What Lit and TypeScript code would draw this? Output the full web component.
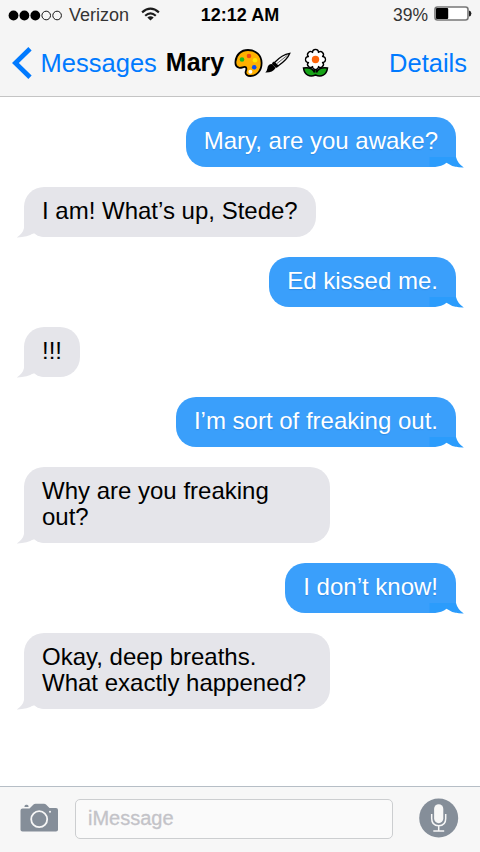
import { LitElement, html, css, svg } from "lit";
import { customElement, property } from "lit/decorators.js";
import { classMap } from "lit/directives/class-map.js";

interface Message {
  text: string;
  sent: boolean;
}

const MESSAGES: Message[] = [
  { text: "Mary, are you awake?", sent: true },
  { text: "I am! What’s up, Stede?", sent: false },
  { text: "Ed kissed me.", sent: true },
  { text: "!!!", sent: false },
  { text: "I’m sort of freaking out.", sent: true },
  { text: "Why are you freaking out?", sent: false },
  { text: "I don’t know!", sent: true },
  { text: "Okay, deep breaths. What exactly happened?", sent: false },
];

@customElement("status-bar")
class StatusBar extends LitElement {
  static styles = css`
    :host {
      display: grid;
      grid-template-columns: 1fr auto 1fr;
      align-items: center;
      height: 30px;
      padding: 0 8px;
      font-size: 18px;
      color: #333;
    }
    svg { display: block; flex: none; }
    .left, .right { display: flex; align-items: center; }
    .right { justify-content: flex-end; }
    .carrier { margin: 0 12px 0 7px; }
    .wifi { margin-top: -3px; }
    .time { font-weight: bold; color: #000; }
    .percent { font-size: 17.5px; margin-right: 6px; }
    .battery { margin-top: -3px; }
  `;
  render() {
    return html`
      <div class="left">
        <svg width="54" height="12" viewBox="0 0 54 12">
          ${[0, 1, 2, 3, 4].map(
            (i) => svg`<circle cx=${5.5 + i * 10.9} cy="6.5" r=${i < 3 ? 4.9 : 4.3}
              fill=${i < 3 ? "#000" : "none"} stroke="#111" stroke-width=${i < 3 ? 0 : 1}/>`
          )}
        </svg>
        <span class="carrier">Verizon</span>
        <svg class="wifi" width="19" height="14" viewBox="0 0 19 14">
          <g fill="none" stroke="#1c1c1c" stroke-width="2.2">
            <path d="M1.1 5.4 Q9.5 -2 17.9 5.4" />
            <path d="M4.2 8.7 Q9.5 4 14.8 8.7" />
          </g>
          <path d="M6.3 10.4 Q9.5 7.9 12.7 10.4 L9.5 13.5Z" fill="#1c1c1c" />
        </svg>
      </div>
      <span class="time">12:12 AM</span>
      <div class="right">
        <span class="percent">39%</span>
        <svg class="battery" width="38" height="15" viewBox="0 0 38 15">
          <rect x="1" y="1" width="33" height="13" rx="2.5" fill="#fff" stroke="#777" stroke-width="1.6" />
          <rect x="2" y="2" width="12.2" height="11" rx="1" fill="#000" />
          <path d="M35 4.5 Q37.4 5 37.4 7.5 Q37.4 10 35 10.5Z" fill="#222" />
        </svg>
      </div>
    `;
  }
}

@customElement("nav-bar")
class NavBar extends LitElement {
  static styles = css`
    :host {
      display: flex;
      align-items: center;
      height: 66px;
      padding: 0 13px 0 12px;
      font-size: 25.5px;
      line-height: 30px;
      color: #007aff;
      box-sizing: border-box;
    }
    svg { display: block; flex: none; }
    .chevron { margin-right: 8.6px; }
    .title { margin: -2px 9.5px 0 9px; font-size: 25px; font-weight: bold; color: #000; }
    .palette { margin-top: -1px; }
    .brush { margin-left: 1px; margin-top: -1px; }
    .flower { margin-left: 11px; margin-top: -1px; }
    .details { margin-left: auto; }
  `;
  render() {
    return html`
      <svg class="chevron" width="20" height="32" viewBox="0 0 20 32">
        <path d="M18 1.8 L3.4 16 L18 30.2" fill="none" stroke="#007aff" stroke-width="4.7" />
      </svg>
      <span>Messages</span>
      <span class="title">Mary</span>
      <svg class="palette" width="29" height="30" viewBox="0 0 29 30">
        <path d="M14 2 C22 2 27.6 7.5 27.6 15 C27.6 23 22.5 28 16.5 28 C13.5 28 11.2 26.5 11.6 24
          C12 22 13.2 20.5 11.8 19.3 C10.3 18 7.8 20.3 5 19.7 C2.5 19 1.2 16.5 1.5 13.5 C2 6.8 7 2 14 2Z"
          fill="#ffb000" stroke="#000" stroke-width="1.8" />
        <circle cx="15" cy="8" r="2.3" fill="#f04813" />
        <circle cx="8" cy="11.5" r="2.3" fill="#1fba1f" />
        <circle cx="21" cy="12.3" r="2.3" fill="#ffe600" />
        <circle cx="20.2" cy="19.3" r="2.3" fill="#0b4df0" />
        <circle cx="16.4" cy="23.7" r="2" fill="#fff" />
      </svg>
      <svg class="brush" width="27" height="24" viewBox="0 0 27 24">
        <path d="M10.5 11.5 Q18 3.5 25.8 2.3 Q23.5 8.5 14 15Z" fill="#f5f5f5" stroke="#000" stroke-width="1.3" />
        <path d="M13 12.5 L23.5 4.2" stroke="#000" stroke-width="0.6" />
        <path d="M9.2 10.6 L14.5 15.8 L12 17 L7.8 13Z" fill="#000" />
        <path d="M8 13 C5 13 3.6 15 3.3 17.8 Q3 20 1.3 21.5 Q8.5 21.8 11.6 16.9Z" fill="#000" />
      </svg>
      <svg class="flower" width="27" height="30" viewBox="0 0 27 30">
        <path d="M13.5 27 C8 29.2 2.4 27.5 1.5 20 C7 19.2 11 21 12.5 24.5 L12.5 18 H14.5 V24.5
          C16 21 20 19.2 25.5 20 C24.6 27.5 19 29.2 13.5 27Z" fill="#16a318" stroke="#000" stroke-width="1.5" />
        ${[0, 1, 2, 3, 4, 5, 6, 7].map(
          (i) => svg`<ellipse cx="13.5" cy="5" rx="2.9" ry="3.3" fill="#fff" stroke="#000"
            stroke-width="1.7" transform=${`rotate(${i * 45} 13.5 11.5)`}/>`
        )}
        <circle cx="13.5" cy="11.5" r="7" fill="#fff" />
        ${[0, 1, 2, 3, 4, 5, 6, 7].map(
          (i) => svg`<ellipse cx="13.5" cy="5" rx="2.3" ry="2.7" fill="#fff"
            transform=${`rotate(${i * 45} 13.5 11.5)`}/>`
        )}
        <circle cx="13.5" cy="11.5" r="3.7" fill="#ff650a" />
      </svg>
      <span class="details">Details</span>
    `;
  }
}

@customElement("message-bubble")
class MessageBubble extends LitElement {
  @property() text = "";
  @property({ type: Boolean }) sent = false;

  static styles = css`
    :host { display: flex; }
    .bubble {
      position: relative;
      box-sizing: border-box;
      max-width: 306px;
      padding: 11px 18px 13px;
      border-radius: 20px;
      font-size: 24px;
      line-height: 26px;
      background: #e5e5ea;
      color: #000;
    }
    .sent {
      margin-left: auto;
      border-bottom-right-radius: 0;
      background: #3a9ffb;
      color: #fff;
      text-shadow: 0 1px 1px rgba(0, 70, 150, 0.22);
    }
    .tail { position: absolute; bottom: -1px; left: -8px; display: block; }
    .sent .tail { left: auto; right: -9px; }
  `;
  render() {
    return html`
      <div class=${classMap({ bubble: true, sent: this.sent })}>
        ${this.text}
        ${this.sent
          ? html`<svg class="tail" width="36" height="12" viewBox="0 0 36 12">
              <path d="M0.5 1 H27 Q28.5 7.5 34.8 11.4 Q30 11.5 26 10.4 H0.5Z" fill="#2b9cfc" />
              <path d="M5 11.2 Q13 10.4 17.5 6.8 Q22 10.2 28.5 11.2 V12 H5Z" fill="#fff" />
            </svg>`
          : html`<svg class="tail" width="28" height="22" viewBox="0 0 28 22">
              <path d="M8 1 V12 Q7 17.5 0.8 21.4 Q11 21.5 18.5 16.8 V1Z" fill="#e5e5ea" />
              <path d="M9 21.6 Q14 20 18 17.2 Q21 20 26 21.1 V22 H9Z" fill="#fff" />
            </svg>`}
      </div>
    `;
  }
}

@customElement("compose-bar")
class ComposeBar extends LitElement {
  static styles = css`
    :host {
      display: flex;
      align-items: center;
      box-sizing: border-box;
      height: 66px;
      padding: 0 21px 0 20px;
      border-top: 1px solid #b6bec6;
      background: #f7f7f7;
    }
    svg { display: block; flex: none; }
    .camera { margin-top: -4px; }
    .field {
      flex: 1;
      box-sizing: border-box;
      height: 40px;
      margin: -1px 26px 0 17px;
      padding-left: 12px;
      border: 1px solid #ccced0;
      border-radius: 5px;
      background: #fafafa;
      color: #c3c3c8;
      font-size: 20px;
      line-height: 37px;
      -webkit-text-stroke: 0.3px #c3c3c8;
    }
    .mic { margin-top: -3px; }
  `;
  render() {
    return html`
      <svg class="camera" width="38" height="30" viewBox="0 0 38 30">
        <path d="M2.5 5.5 H9.5 L13.5 1.5 Q14.3 .7 15.5 .7 H24 Q25.2 .7 26 1.5 L29.5 5 H36 Q38 5 38 7
          V26.8 Q38 28.6 36 28.6 H2.5 Q.5 28.6 .5 26.8 V7.5 Q.5 5.5 2.5 5.5Z" fill="#858e99" />
        <path d="M4.5 4 V3.2 Q4.5 1.7 6 1.7 H7 Q8.5 1.7 8.5 3.2 V4Z" fill="#858e99" />
        <circle cx="19.2" cy="16.2" r="8" fill="none" stroke="#f7f7f7" stroke-width="1.8" />
        <circle cx="30" cy="8.7" r="1" fill="#f7f7f7" />
      </svg>
      <div class="field">iMessage</div>
      <svg class="mic" width="40" height="40" viewBox="0 0 40 40">
        <circle cx="19.7" cy="20" r="19.5" fill="#858e99" />
        <rect x="15.1" y="6.2" width="9.2" height="19" rx="4.6" fill="#f7f7f7" />
        <path d="M12.7 16 V20.5 Q12.7 27.7 19.7 27.7 Q26.7 27.7 26.7 20.5 V16 M19.7 27.7 V33 M14.3 33 H25.2"
          fill="none" stroke="#f7f7f7" stroke-width="1.5" />
      </svg>
    `;
  }
}

@customElement("app-root")
class AppRoot extends LitElement {
  static styles = css`
    :host {
      display: flex;
      flex-direction: column;
      box-sizing: border-box;
      width: 480px;
      height: 852px;
      overflow: hidden;
      background: #fff;
      font-family: "Liberation Sans", Arial, sans-serif;
    }
    header {
      flex: none;
      height: 97px;
      box-sizing: border-box;
      border-bottom: 1px solid #c4c4c4;
      background: #f5f5f5;
    }
    main {
      flex: 1;
      display: flex;
      flex-direction: column;
      gap: 20px;
      padding: 20px 24px 0;
    }
  `;
  render() {
    return html`
      <header>
        <status-bar></status-bar>
        <nav-bar></nav-bar>
      </header>
      <main>
        ${MESSAGES.map((m) => html`<message-bubble .text=${m.text} .sent=${m.sent}></message-bubble>`)}
      </main>
      <compose-bar></compose-bar>
    `;
  }
}
